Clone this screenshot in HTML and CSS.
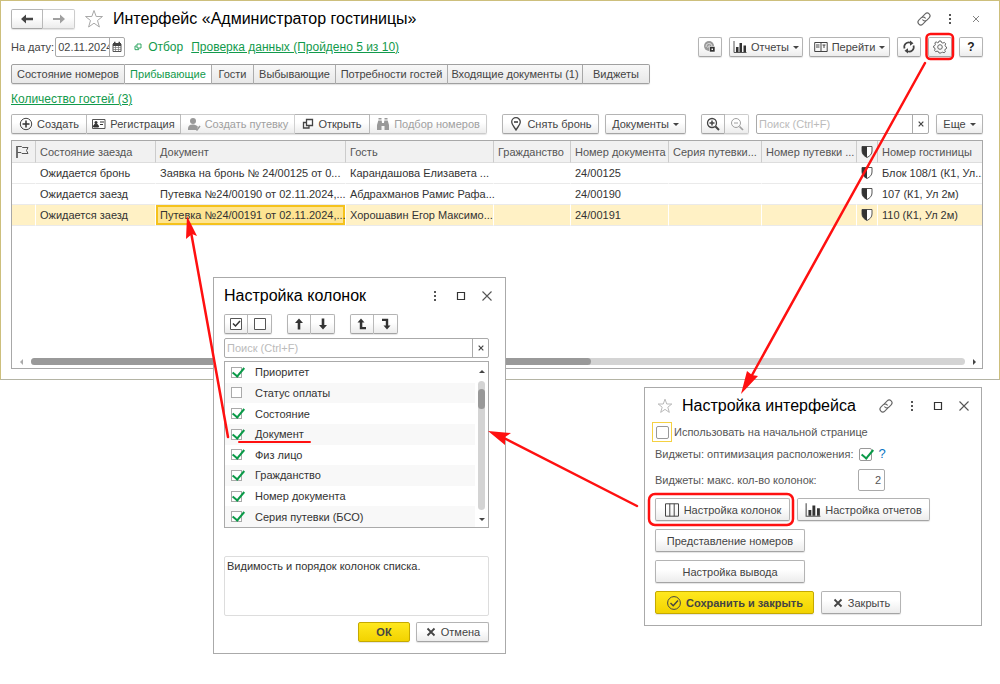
FILE: index.html
```html
<!DOCTYPE html>
<html lang="ru">
<head>
<meta charset="utf-8">
<title>Интерфейс «Администратор гостиницы»</title>
<link rel="stylesheet" href="styles.css">
</head>
<body>
<svg class="defs" width="0" height="0" aria-hidden="true">
  <symbol id="left" viewBox="0 0 14 12"><path d="M1 6l5-4.500v3.300h7v2.400H6v3.300z" fill="currentColor"/></symbol>
  <symbol id="right" viewBox="0 0 14 12"><path d="M13 6L8 1.500v3.500H1v2h7v3.500z" fill="currentColor"/></symbol>
  <symbol id="star" viewBox="0 0 20 20"><path d="M10 1.500l2.200 6h6.300l-5 4 1.900 6.500L10 14.200 4.600 18l1.900-6.500-5-4h6.300z" fill="#fff" stroke="#a8a8a8" stroke-linejoin="round"/></symbol>
  <symbol id="link" viewBox="0 0 16 16"><g fill="none" stroke="#666" stroke-width="1.100" transform="rotate(-45 8 8)"><path d="M8 10.800H3.500a2.800 2.800 0 0 1 0-5.600h3.500a2.800 2.800 0 0 1 2.500 3.500"/><path d="M8 5.200h4.500a2.800 2.800 0 0 1 0 5.600H9a2.800 2.800 0 0 1-2.500-3.500"/></g></symbol>
  <symbol id="dots" viewBox="0 0 12 12"><path d="M5 1h2v2H5zM5 5h2v2H5zM5 9h2v2H5z" fill="#555"/></symbol>
  <symbol id="square" viewBox="0 0 12 12"><path d="M2.500 2.500h7v7h-7z" fill="none" stroke="#333" stroke-width="1.200"/></symbol>
  <symbol id="cross" viewBox="0 0 12 12"><path d="M1.500 1.500l9 9M10.500 1.500l-9 9" stroke="#555" stroke-width="1.100"/></symbol>
  <symbol id="boldx" viewBox="0 0 12 12"><path d="M2.500 2.500l7 7M9.500 2.500l-7 7" stroke="#444" stroke-width="1.800"/></symbol>
  <symbol id="cal" viewBox="0 0 12 12"><path d="M2 3h8v7.500H2z" fill="none" stroke="#555"/><path d="M2 2h8v3H2zM3 .8h1.500V3H3zM7.500.8H9V3H7.500z" fill="#444"/><path d="M2 6.500h8M2 8.500h8M4.500 5v5M7.500 5v5" stroke="#777" stroke-width=".7"/></symbol>
  <symbol id="open" viewBox="0 0 12 12"><path d="M4 4.500H1.500v5.500h5.500V8" fill="none" stroke="currentColor" stroke-width="1.300"/><path d="M4.500 1.500h6v6h-6z" fill="#fff" stroke="currentColor" stroke-width="1.300"/></symbol>
  <symbol id="plus" viewBox="0 0 14 14"><circle cx="7" cy="7" r="5.700" fill="none" stroke="#444"/><path d="M7 3.500v7M3.500 7h7" stroke="#333" stroke-width="1.500"/></symbol>
  <symbol id="card" viewBox="0 0 14 12"><path d="M.5 1.500h12.500v9H.5z" fill="#fff" stroke="#555"/><circle cx="4" cy="4.500" r="1.500" fill="#333"/><path d="M1.500 9c0-4 5-4 5 0zM8 4h4M8 6.500h3" stroke="#333" fill="#333"/></symbol>
  <symbol id="person" viewBox="0 0 14 14"><circle cx="6" cy="4" r="3" fill="#999"/><path d="M1 13c0-5 2-5 4-5.500h2c2 .5 3 1 4 2.500l-2 3z" fill="#999"/><path d="M8 11l2 2 3-4" stroke="#999" stroke-width="1.500" fill="none"/></symbol>
  <symbol id="bino" viewBox="0 0 14 14"><path d="M2.500 1h3v1.500h-3zM8.500 1h3v1.500h-3zM2.300 3.500h3.400L6 6h2l.3-2.500h3.400L13 8v5H8.500V9h-3v4H1V8z" fill="#999"/></symbol>
  <symbol id="pin" viewBox="0 0 14 14"><path d="M7 13C5.500 10 2.700 8 2.700 5a4.300 4.300 0 0 1 8.600 0c0 3-2.800 5-4.300 8z" fill="none" stroke="#444" stroke-width="1.300"/><path d="M5 5h4" stroke="#333" stroke-width="1.500"/></symbol>
  <symbol id="zin" viewBox="0 0 14 14"><circle cx="6" cy="6" r="4.500" fill="none" stroke="currentColor" stroke-width="1.300"/><path d="M9.500 9.500L13 13" stroke="currentColor" stroke-width="2"/><path d="M6 3.500v5M3.500 6h5" stroke="currentColor" stroke-width="1.500"/></symbol>
  <symbol id="zout" viewBox="0 0 14 14"><circle cx="6" cy="6" r="4.500" fill="none" stroke="currentColor"/><path d="M9.500 9.500L13 13" stroke="currentColor" stroke-width="1.700"/><path d="M4 6h4" stroke="currentColor"/></symbol>
  <symbol id="globe" viewBox="0 0 14 14"><circle cx="6" cy="6" r="5" fill="#999"/><path d="M3 7a3 3 0 0 1 6-1M5 8a1.500 1.500 0 0 1 2-2" stroke="#eee" fill="none" stroke-width=".8"/><path d="M6.500 6.500h5.500V12H6.500z" fill="#333" stroke="#fff" stroke-width=".6"/><path d="M8.500 8.500h1.500V10H8.500z" fill="#fff"/></symbol>
  <symbol id="bars" viewBox="0 0 14 14"><path d="M1 1v11.500h12.500" fill="none" stroke="#555"/><path d="M3 7h2.500v5H3zM6.500 3H9v9H6.500zM10.500 5.500H13V12h-2.500z" fill="#333"/></symbol>
  <symbol id="panes" viewBox="0 0 14 12"><path d="M.7 1.500h12.500v9H.7zM7 1.500v9" fill="none" stroke="#444"/><path d="M2 4h3.500M2 6h3.500M8.500 4h3M10 4v3" stroke="#444" fill="none"/></symbol>
  <symbol id="refresh" viewBox="0 0 14 14"><path d="M2.500 8.500A4.600 4.600 0 0 1 8.500 2.700M11.500 5.500a4.600 4.600 0 0 1-6 5.800" fill="none" stroke="#444" stroke-width="1.700"/><path d="M8 .5l3.500 2.700L8 5.700zM6 8.300v5.200L2.500 10.800z" fill="#444"/></symbol>
  <symbol id="gear" viewBox="0 0 14 14"><path d="M5.500 2.500l.5-1.500h2l.5 1.500 1.400.6 1.500-.7 1.300 1.400-.7 1.400.5 1.300 1 .5v1.500l-1.200.5-.5 1.400.6 1.300-1.300 1.100-1.400-.6-1.400.5L8 13H6l-.6-1.400-1.400-.5-1.300.6-1.200-1.300.6-1.300-.5-1.300L.6 7.500V6l1.200-.5.6-1.300-.6-1.300L3.100 1.800l1.200.9z" fill="none" stroke="#666"/><circle cx="7" cy="7" r="2.300" fill="none" stroke="#666"/></symbol>
  <symbol id="flag" viewBox="0 0 14 14"><path d="M2 1v12" stroke="#444" stroke-width="1.500"/><path d="M2.500 1.500h4l1 1H13l-1.500 3 1.500 3H7l-1-1H2.500" fill="none" stroke="#555"/></symbol>
  <symbol id="shield" viewBox="0 0 12 14"><path d="M1 1.500h10V6c0 3-2 5-5 6.500C3 11 1 9 1 6z" fill="#fff" stroke="#555"/><path d="M1 1.500h5v11C3 11 1 9 1 6z" fill="#333"/></symbol>
  <symbol id="tickbox" viewBox="0 0 14 14"><path d="M1.500 1.500h11v11h-11z" fill="#fff" stroke="#555"/><path d="M4 6.500L6.500 9 11 4" fill="none" stroke="#333" stroke-width="1.500"/></symbol>
  <symbol id="emptybox" viewBox="0 0 14 14"><path d="M1.500 1.500h11v11h-11z" fill="#fff" stroke="#555"/></symbol>
  <symbol id="up" viewBox="0 0 12 12"><path d="M6 .5l4 4.500H7.300v6.500H4.700V5H2z" fill="#333"/></symbol>
  <symbol id="down" viewBox="0 0 12 12"><path d="M6 11.500L2 7h2.700V.5h2.600V7H10z" fill="#333"/></symbol>
  <symbol id="top" viewBox="0 0 14 14"><path d="M6 1.500l3.500 4H7.300v4.500H11v2.300H4.800V5.500H2.500z" fill="#333"/></symbol>
  <symbol id="bottom" viewBox="0 0 14 14"><path d="M8 12.500L4.500 8.500h2.300V4H3V1.700h6.200v6.800h2.300z" fill="#333"/></symbol>
  <symbol id="cols" viewBox="0 0 16 14"><path d="M1.500.8h13v12.400h-13zM5.800.8v12.400M10.200.8v12.400" fill="none" stroke="#444"/></symbol>
  <symbol id="okc" viewBox="0 0 16 16"><circle cx="8" cy="8" r="6.400" fill="none" stroke="#444"/><path d="M4.500 8L7.200 10.800 12 5.500" fill="none" stroke="#444" stroke-width="1.400"/></symbol>
</svg>

<main class="window">
  <header class="titlebar">
    <div class="group nav">
      <button class="btn" aria-label="Назад"><svg class="i14"><use href="#left"/></svg></button>
      <button class="btn off" aria-label="Вперед"><svg class="i14"><use href="#right"/></svg></button>
    </div>
    <svg class="star"><use href="#star"/></svg>
    <h1>Интерфейс «Администратор гостиницы»</h1>
    <div class="wincontrols">
      <button class="bare" aria-label="Ссылка"><svg class="i16"><use href="#link"/></svg></button>
      <button class="bare" aria-label="Меню"><svg class="i12"><use href="#dots"/></svg></button>
      <button class="bare" aria-label="Закрыть"><svg class="i8"><use href="#cross"/></svg></button>
    </div>
  </header>

  <div class="datebar">
    <label for="date">На дату:</label>
    <div class="field date"><input id="date" type="text" value="02.11.2024"><button aria-label="Календарь"><svg class="i12"><use href="#cal"/></svg></button></div>
    <a class="filter" href="#"><svg class="i8"><use href="#open"/></svg>Отбор</a>
    <a class="check" href="#">Проверка данных (Пройдено 5 из 10)</a>
    <div class="actions">
      <button class="btn square" aria-label="Сервис"><svg class="i14"><use href="#globe"/></svg></button>
      <button class="btn reports"><svg class="i14"><use href="#bars"/></svg>Отчеты<i class="caret"></i></button>
      <button class="btn goto"><svg class="i14"><use href="#panes"/></svg>Перейти<i class="caret"></i></button>
      <button class="btn square" aria-label="Обновить"><svg class="i14"><use href="#refresh"/></svg></button>
      <button class="btn square" aria-label="Настройка"><svg class="i14"><use href="#gear"/></svg></button>
      <button class="btn square help">?</button>
    </div>
  </div>

  <nav class="group tabs">
    <button class="btn t1">Состояние номеров</button><button class="btn t2 active">Прибывающие</button><button class="btn t3">Гости</button><button class="btn t4">Выбывающие</button><button class="btn t5">Потребности гостей</button><button class="btn t6">Входящие документы (1)</button><button class="btn t7">Виджеты</button>
  </nav>

  <a class="count" href="#">Количество гостей (3)</a>

  <div class="toolbar">
    <div class="group">
      <button class="btn b1"><svg class="i14"><use href="#plus"/></svg>Создать</button><button class="btn b2"><svg class="i14"><use href="#card"/></svg>Регистрация</button><button class="btn b3 off"><svg class="i14"><use href="#person"/></svg>Создать путевку</button><button class="btn b4"><svg class="i12"><use href="#open"/></svg>Открыть</button><button class="btn b5 off"><svg class="i14"><use href="#bino"/></svg>Подбор номеров</button>
    </div>
    <button class="btn unbook"><svg class="i14"><use href="#pin"/></svg>Снять бронь</button>
    <button class="btn docs">Документы<i class="caret"></i></button>
    <div class="group zoom"><button class="btn" aria-label="Найти"><svg class="i14"><use href="#zin"/></svg></button><button class="btn off" aria-label="Отменить поиск"><svg class="i14"><use href="#zout"/></svg></button></div>
    <div class="field search"><input type="text" placeholder="Поиск (Ctrl+F)" aria-label="Поиск"><button aria-label="Очистить"><svg class="i8"><use href="#boldx"/></svg></button></div>
    <button class="btn more">Еще<i class="caret"></i></button>
  </div>

  <div class="grid">
    <table>
      <colgroup><col class="c1"><col class="c2"><col class="c3"><col class="c4"><col class="c5"><col class="c6"><col class="c7"><col class="c8"><col class="c9"><col></colgroup>
      <thead><tr><th class="ico"><svg class="i14"><use href="#flag"/></svg></th><th>Состояние заезда</th><th>Документ</th><th>Гость</th><th>Гражданство</th><th>Номер документа</th><th>Серия путевки...</th><th>Номер путевки ...</th><th class="ico"><svg class="i14"><use href="#shield"/></svg></th><th>Номер гостиницы</th></tr></thead>
      <tbody>
        <tr><td></td><td>Ожидается бронь</td><td>Заявка на бронь № 24/00125 от 0...</td><td>Карандашова Елизавета ...</td><td></td><td>24/00125</td><td></td><td></td><td class="ico"><svg class="i14"><use href="#shield"/></svg></td><td>Блок 108/1 (К1, Ул...</td></tr>
        <tr><td></td><td>Ожидается заезд</td><td>Путевка №24/00190 от 02.11.2024,...</td><td>Абдрахманов Рамис Рафа...</td><td></td><td>24/00190</td><td></td><td></td><td class="ico"><svg class="i14"><use href="#shield"/></svg></td><td>107 (К1, Ул 2м)</td></tr>
        <tr class="selected"><td></td><td>Ожидается заезд</td><td class="current">Путевка №24/00191 от 02.11.2024,...</td><td>Хорошавин Егор Максимо...</td><td></td><td>24/00191</td><td></td><td></td><td class="ico"><svg class="i14"><use href="#shield"/></svg></td><td>110 (К1, Ул 2м)</td></tr>
      </tbody>
    </table>
    <div class="hscroll"><i class="tri l"></i><div class="track"><div class="thumb"></div></div><i class="tri r"></i></div>
  </div>
</main>

<section class="dialog columns" aria-label="Настройка колонок">
  <header class="dtitle"><h2>Настройка колонок</h2>
    <div class="dcontrols"><button class="bare" aria-label="Меню"><svg class="i12"><use href="#dots"/></svg></button><button class="bare" aria-label="Развернуть"><svg class="i12"><use href="#square"/></svg></button><button class="bare" aria-label="Закрыть"><svg class="i12"><use href="#cross"/></svg></button></div>
  </header>
  <div class="dtools">
    <div class="group"><button class="btn" aria-label="Отметить все"><svg class="i14"><use href="#tickbox"/></svg></button><button class="btn" aria-label="Снять все"><svg class="i14"><use href="#emptybox"/></svg></button></div>
    <div class="group"><button class="btn" aria-label="Вверх"><svg class="i12"><use href="#up"/></svg></button><button class="btn" aria-label="Вниз"><svg class="i12"><use href="#down"/></svg></button></div>
    <div class="group"><button class="btn" aria-label="В начало"><svg class="i14"><use href="#top"/></svg></button><button class="btn" aria-label="В конец"><svg class="i14"><use href="#bottom"/></svg></button></div>
  </div>
  <div class="field dsearch"><input type="text" placeholder="Поиск (Ctrl+F)" aria-label="Поиск колонки"><button aria-label="Очистить"><svg class="i8"><use href="#boldx"/></svg></button></div>
  <div class="list">
    <div class="items">
      <label><input type="checkbox" checked>Приоритет</label>
      <label><input type="checkbox">Статус оплаты</label>
      <label><input type="checkbox" checked>Состояние</label>
      <label><input type="checkbox" checked>Документ</label>
      <label><input type="checkbox" checked>Физ лицо</label>
      <label><input type="checkbox" checked>Гражданство</label>
      <label><input type="checkbox" checked>Номер документа</label>
      <label><input type="checkbox" checked>Серия путевки (БСО)</label>
    </div>
    <div class="vscroll"><i class="tri u"></i><div class="vtrack"><div class="vthumb"></div></div><i class="tri d"></i></div>
  </div>
  <textarea class="note" readonly aria-label="Описание">Видимость и порядок колонок списка.</textarea>
  <footer class="dfoot"><button class="btn yellow ok">ОК</button><button class="btn cancel"><svg class="i12"><use href="#boldx"/></svg>Отмена</button></footer>
</section>

<section class="dialog settings" aria-label="Настройка интерфейса">
  <header class="dtitle"><svg class="dstar" viewBox="0 0 20 20"><use href="#star"/></svg><h2>Настройка интерфейса</h2>
    <div class="dcontrols"><button class="bare" aria-label="Ссылка"><svg class="i16"><use href="#link"/></svg></button><button class="bare" aria-label="Меню"><svg class="i12"><use href="#dots"/></svg></button><button class="bare" aria-label="Развернуть"><svg class="i12"><use href="#square"/></svg></button><button class="bare" aria-label="Закрыть"><svg class="i12"><use href="#cross"/></svg></button></div>
  </header>
  <label class="start"><span class="focus"><input type="checkbox"></span>Использовать на начальной странице</label>
  <div class="opt"><label for="opt">Виджеты: оптимизация расположения:</label><input id="opt" type="checkbox" checked><a class="hint" href="#">?</a></div>
  <div class="opt maxrow"><label for="max">Виджеты: макс. кол-во колонок:</label><input id="max" class="num" type="text" value="2"></div>
  <div class="big">
    <div class="pair"><button class="btn w1"><svg class="i16"><use href="#cols"/></svg>Настройка колонок</button><button class="btn w2"><svg class="i16"><use href="#bars"/></svg>Настройка отчетов</button></div>
    <button class="btn w3">Представление номеров</button>
    <button class="btn w3">Настройка вывода</button>
    <div class="pair save"><button class="btn yellow w4"><svg class="i16"><use href="#okc"/></svg>Сохранить и закрыть</button><button class="btn w5"><svg class="i12"><use href="#boldx"/></svg>Закрыть</button></div>
  </div>
</section>

<svg class="marks" width="1000" height="684" aria-hidden="true">
  <g fill="none" stroke="#ff1010" stroke-width="2.500" stroke-linecap="round">
    <rect x="926.500" y="34" width="26.500" height="25" rx="4"/>
    <rect x="649" y="494" width="144" height="31" rx="6"/>
    <path d="M925 63L751 377M637 506L504 438M228 437L191 232"/>
    <path d="M239 442h71" stroke-width="2"/>
  </g>
  <g fill="#ff1010"><path d="M741 394l6-23 5 4 6 1z"/><path d="M488 431l23 2-6 4 0 8z"/><path d="M187 216l10 20-5-2-6 5z"/></g>
</svg>
</body>
</html>
```
FILE: styles.css
```css
* { box-sizing: border-box; }
body { margin: 0; min-height: 100vh; background: #fff; color: #444; font: 11px/14px "Liberation Sans", Arial, sans-serif; position: relative; }
button, input, textarea { font: inherit; color: inherit; }
button { cursor: pointer; }
h1, h2 { margin: 0; font-weight: 400; color: #000; white-space: nowrap; }
h1, h2 { font-size: 16px; line-height: 20px; }
svg { flex: none; display: block; }
.defs { position: absolute; }
.i8 { width: 8px; height: 8px; }
.i12 { width: 12px; height: 12px; }
.i14 { width: 14px; height: 14px; }
.i16 { width: 16px; height: 16px; }

.btn { display: inline-flex; align-items: center; justify-content: center; gap: 4px; height: 20px; padding: 0 5px; border: 1px solid #b4b4b4; border-bottom-color: #a4a4a4; border-radius: 2px; background: linear-gradient(#fff 40%, #ececec); white-space: nowrap; box-shadow: 0 1px 1px #e4e4e4; }
.btn.off { color: #a0a0a0; border-color: #ccc; }
.group { display: flex; }
.group .btn { border-radius: 0; }
.group .btn + .btn { border-left: 0; }
.group .btn:first-child { border-radius: 2px 0 0 2px; }
.group .btn:last-child { border-radius: 0 2px 2px 0; }
.bare { display: grid; place-items: center; width: 26px; height: 20px; padding: 0; border: 0; background: none; }
.caret { border: 3px solid transparent; border-top-color: #444; border-bottom: 0; }
.yellow { background: linear-gradient(#ffe81f, #f2d300); border-color: #c5a900; font-weight: 700; }
.field { display: flex; height: 20px; border: 1px solid #aaa; border-radius: 2px; background: #fff; }
.field input { flex: 1; min-width: 0; border: 0; padding: 0 2px; background: none; outline: 0; }
.field input::placeholder { color: #bbb; opacity: 1; }
.field button { display: grid; place-items: center; width: 16px; padding: 0; border: 0; border-left: 1px solid #aaa; background: none; }

.window { display: flex; flex-direction: column; height: 380px; padding: 7px 16px 10px 10px; border: 1px solid #cdbf7c; border-bottom-color: #b4b4a4; }
.titlebar { display: flex; align-items: center; height: 21px; }
.nav .btn { width: 32px; }
.star { width: 20px; height: 20px; margin: 0 9px 0 9px; }
.wincontrols { display: flex; margin-left: auto; margin-right: -6px; }
.datebar { display: flex; align-items: center; margin-top: 8px; height: 20px; }
.date { width: 70px; margin: 0 9px 0 1px; }
.date input { padding: 0 0 0 2px; }
.date button { width: 15px; }
.datebar a { font-size: 12px; color: #129a4c; white-space: nowrap; }
.datebar .filter { display: flex; align-items: center; gap: 6px; margin-right: 8px; text-decoration: none; }
.actions { display: flex; margin-left: auto; }
.square { width: 24px; padding: 0; margin-left: 7px; }
.square:first-child { margin: 0 7px 0 0; }
.reports { width: 74px; margin-right: 6px; }
.goto { width: 81px; }
.help { font-weight: 700; font-size: 12px; color: #222; }
.tabs { margin-top: 7px; }
.tabs .btn { border-color: #a0a0a0; background: linear-gradient(#f8f8f8, #e8e8e8); }
.tabs .active { background: #fff; color: #129a4c; }
.t1 { width: 114px; } .t2 { width: 87px; } .t3 { width: 42px; } .t4 { width: 82px; } .t5 { width: 112px; } .t6 { width: 135px; } .t7 { width: 67px; }
.count { align-self: flex-start; margin-top: 7px; font-size: 12px; line-height: 16px; color: #129a4c; }
.toolbar { display: flex; margin-top: 7px; }
.b1 { width: 76px; } .b2 { width: 94px; } .b3 { width: 114px; } .b4 { width: 75px; } .b5 { width: 117px; }
.unbook { width: 97px; margin-left: 15px; }
.docs { width: 81px; margin-left: 6px; }
.zoom { margin: 0 7px 0 15px; }
.zoom .btn { width: 24px; }
.search { flex: 1; margin-right: 7px; }
.more { width: 47px; }

.grid { flex: 1; display: flex; flex-direction: column; margin-top: 6px; border: 1px solid #a8a8a8; overflow: hidden; }
table { width: 100%; table-layout: fixed; border-collapse: separate; border-spacing: 0; }
.c1 { width: 24px; } .c2 { width: 120px; } .c3 { width: 190px; } .c4 { width: 148px; } .c5 { width: 77px; } .c6 { width: 98px; } .c7 { width: 93px; } .c8 { width: 95px; } .c9 { width: 21px; }
th, td { padding: 0 0 0 4px; text-align: left; font-weight: 400; white-space: nowrap; }
th { height: 22px; background: #f1f1f1; color: #555; border-right: 1px solid #ccc; border-bottom: 1px solid #ddd; }
td { height: 21px; color: #333; border-bottom: 1px solid #eaeaea; border-right: 1px solid #fff; }
th:last-child, td:last-child { border-right: 0; }
.ico { padding: 0 0 0 3px; }
.selected td { background: #fff1c5; }
.selected .current { background: #fee592; box-shadow: inset 0 0 0 2px #f5c21c; }
.hscroll { display: flex; align-items: center; gap: 8px; margin-top: auto; padding: 0 6px 3px 8px; }
.track { flex: 1; height: 7px; border-radius: 4px; background: #d4d4d4; }
.thumb { width: 60%; height: 7px; border-radius: 4px; background: #999; }
.tri { border: 3px solid transparent; flex: none; }
.tri.l { border-right-color: #aaa; border-left: 0; }
.tri.r { border-left-color: #444; border-right: 0; }
.tri.u { border-bottom-color: #444; border-top: 0; }
.tri.d { border-top-color: #444; border-bottom: 0; }

.dialog { position: absolute; display: flex; flex-direction: column; border: 1px solid #aaa; background: #fff; }
.dtitle { display: flex; align-items: center; height: 20px; }
.dcontrols { display: flex; margin-left: auto; }
.columns { left: 213px; top: 277px; width: 293px; padding: 8px 16px 11px 10px; }
.columns .dcontrols { margin-right: -11px; }
.dtools { display: flex; gap: 15px; margin-top: 8px; }
.dtools .btn { width: 24px; }
.dsearch { margin-top: 4px; }
.list { display: flex; height: 167px; margin-top: 3px; border: 1px solid #aaa; }
.items { flex: 1; display: flex; flex-direction: column; }
.items label { flex: 1; display: flex; align-items: center; gap: 13px; padding-left: 6px; color: #333; }
.items label:nth-child(even) { background: #f8f8f8; }
.vscroll { display: flex; flex-direction: column; align-items: center; gap: 8px; width: 13px; padding: 8px 0 6px; }
.vtrack { flex: 1; width: 7px; border-radius: 4px; background: #d4d4d4; padding-top: 8px; }
.vthumb { height: 20px; border-radius: 4px; background: #999; }
.note { height: 60px; margin-top: 28px; padding: 2px; border: 1px solid #ddd; border-radius: 2px; resize: none; outline: 0; color: #333; }
.dfoot { display: flex; justify-content: flex-end; gap: 6px; margin-top: 6px; }
.ok { width: 52px; }
.cancel { width: 73px; }

input[type="checkbox"] { appearance: none; flex: none; width: 11px; height: 11px; margin: 0; border: 1px solid #aaa; background: #fff; position: relative; }
input[type="checkbox"]:checked::after { content: ""; position: absolute; left: 3px; top: -3px; width: 5px; height: 10px; border: solid #0a9a48; border-width: 0 2px 2px 0; transform: rotate(40deg); }

.settings { left: 644px; top: 387px; width: 338px; padding: 8px 10px 11px; color: #555; }
.dstar { width: 16px; height: 16px; margin: 0 9px 0 2px; }
.settings .dcontrols { margin-right: -6px; }
.start { display: flex; align-items: center; gap: 2px; margin: 6px 0 0 -3px; }
.focus { display: grid; place-items: center; width: 20px; height: 20px; border: 1px solid #f5d142; }
.settings input[type="checkbox"] { width: 13px; height: 13px; border-radius: 2px; border-color: #999; }
.settings input[type="checkbox"]:checked::after { left: 4px; top: -2px; }
.opt { display: flex; align-items: center; gap: 6px; margin-top: 3px; height: 18px; }
.hint { color: #0a76c4; font-size: 13px; text-decoration: none; }
.maxrow { height: 22px; margin-top: 6px; }
.num { width: 27px; height: 22px; margin-left: auto; margin-right: 86px; padding: 0 3px; border: 1px solid #aaa; border-radius: 2px; text-align: right; }
.big { display: flex; flex-direction: column; align-items: flex-start; gap: 8px; margin-top: 7px; }
.big .btn { height: 23px; gap: 4px; color: #444; }
.pair { display: flex; gap: 7px; }
.w1 { width: 135px; } .w2 { width: 133px; } .w3 { width: 150px; } .w4 { width: 159px; } .w5 { width: 80px; }
.marks { position: absolute; left: 0; top: 0; pointer-events: none; }
```
